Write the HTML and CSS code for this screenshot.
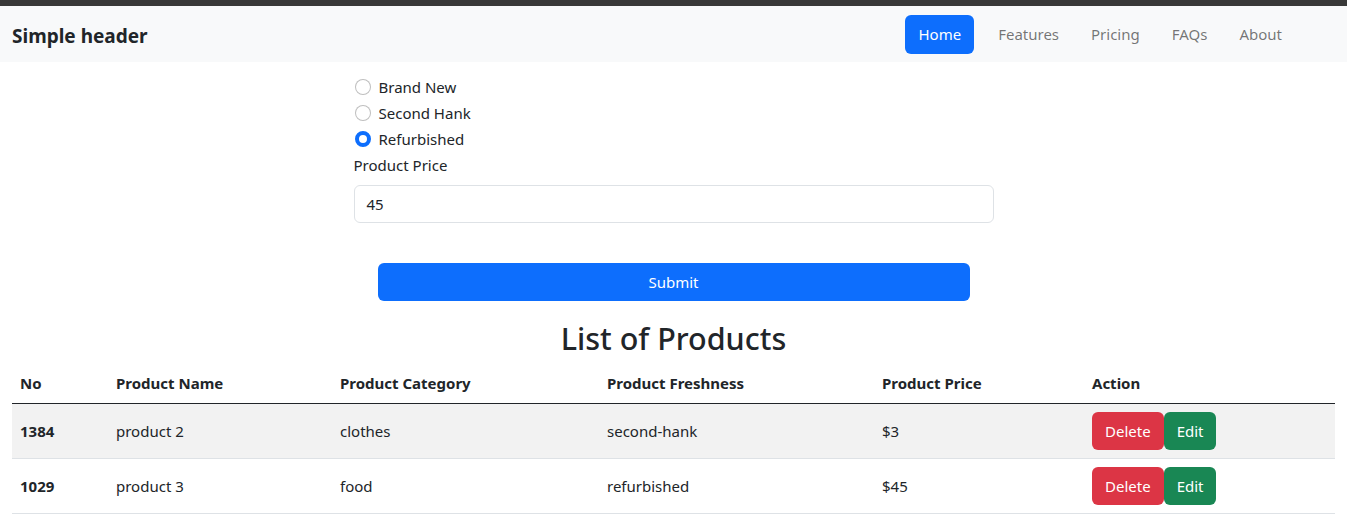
FILE: index.html
```html
<!DOCTYPE html>
<html>
<head>
<meta charset="utf-8">
<link rel="stylesheet" href="styles.css">
</head>
<body>
<div class="topbar"></div>
<header class="navbar">
  <span class="brand">Simple header</span>
  <nav class="nav">
    <a class="nav-link active">Home</a>
    <a class="nav-link">Features</a>
    <a class="nav-link">Pricing</a>
    <a class="nav-link">FAQs</a>
    <a class="nav-link">About</a>
  </nav>
</header>
<main>
  <form class="form">
    <label class="check"><span class="radio"></span>Brand New</label>
    <label class="check"><span class="radio"></span>Second Hank</label>
    <label class="check"><span class="radio checked"></span>Refurbished</label>
    <div class="label">Product Price</div>
    <div class="input">45</div>
    <div class="submit-wrap"><div class="submit">Submit</div></div>
  </form>
  <h2 class="title">List of Products</h2>
  <table class="table">
    <thead>
      <tr><th class="c1">No</th><th class="c2">Product Name</th><th class="c3">Product Category</th><th class="c4">Product Freshness</th><th class="c5">Product Price</th><th class="c6">Action</th></tr>
    </thead>
    <tbody>
      <tr class="striped"><th>1384</th><td>product 2</td><td>clothes</td><td>second-hank</td><td>$3</td><td><span class="btn del">Delete</span><span class="btn edit">Edit</span></td></tr>
      <tr><th>1029</th><td>product 3</td><td>food</td><td>refurbished</td><td>$45</td><td><span class="btn del">Delete</span><span class="btn edit">Edit</span></td></tr>
    </tbody>
  </table>
</main>
</body>
</html>
```
FILE: styles.css
```css
* { box-sizing: border-box; }
body {
  margin: 0;
  font-family: "Noto Sans", "Open Sans", sans-serif;
  font-size: 15px;
  line-height: 24px;
  color: #212529;
  background: #fff;
}
.topbar { height: 6px; background: #383838; }
.navbar {
  height: 56px;
  background: #f8f9fa;
  display: flex;
  align-items: center;
  justify-content: space-between;
  padding: 0 12px;
}
.brand { font-size: 19px; font-weight: 700; color: #212529; margin-top: 4px; }
.nav { display: flex; margin-right: 37px; align-items: center; }
.nav-link {
  padding: 7px 16px 8px;
  color: rgba(0,0,0,.55);
  border-radius: 6px;
  line-height: 24px;
  margin-top: 1px;
}
.nav-link.active { background: #0d6efd; color: #fff; margin-right: 8px; padding: 7px 13px 8px; }
main { padding: 13px 12px 0; }
.form { width: 640px; margin: 0 auto; display: flex; flex-direction: column; }
.check { display: flex; align-items: center; height: 24px; margin-bottom: 2px; padding-left: 1px; }
.radio {
  width: 16px; height: 16px; border-radius: 50%;
  border: 1px solid rgba(0,0,0,.25);
  margin-right: 8px; background: #fff;
}
.radio.checked { background: #fff; border: 4px solid #0d6efd; }
.label { margin-bottom: 8px; }
.input {
  height: 38px; border: 1px solid #dee2e6; border-radius: 6px;
  padding: 6px 12px;
}
.submit-wrap { padding: 40px 24px 0; }
.submit {
  height: 38px; background: #0d6efd; color: #fff; border-radius: 6px;
  display: flex; align-items: center; justify-content: center;
}
.title {
  text-align: center; font-size: 30.5px; font-weight: 500; line-height: 38px;
  margin: 18px 0 6px;
}
.table { width: 100%; border-collapse: collapse; }
.table th, .table td { padding: 8px; text-align: left; vertical-align: middle; border-bottom: 1px solid #dee2e6; }
.table thead th { border-bottom: 1px solid #212529; font-weight: 700; }
.table tbody th { font-weight: 700; }
.striped th, .striped td { background: #f2f2f2; }
.c1 { width: 96px; } .c2 { width: 224px; } .c3 { width: 267px; }
.c4 { width: 275px; } .c5 { width: 210px; }
.btn {
  display: inline-block; height: 38px; line-height: 24px; padding: 7px 13px;
  border-radius: 6px; color: #fff; vertical-align: middle;
}
.del { background: #dc3545; }
.edit { background: #198754; }
```
